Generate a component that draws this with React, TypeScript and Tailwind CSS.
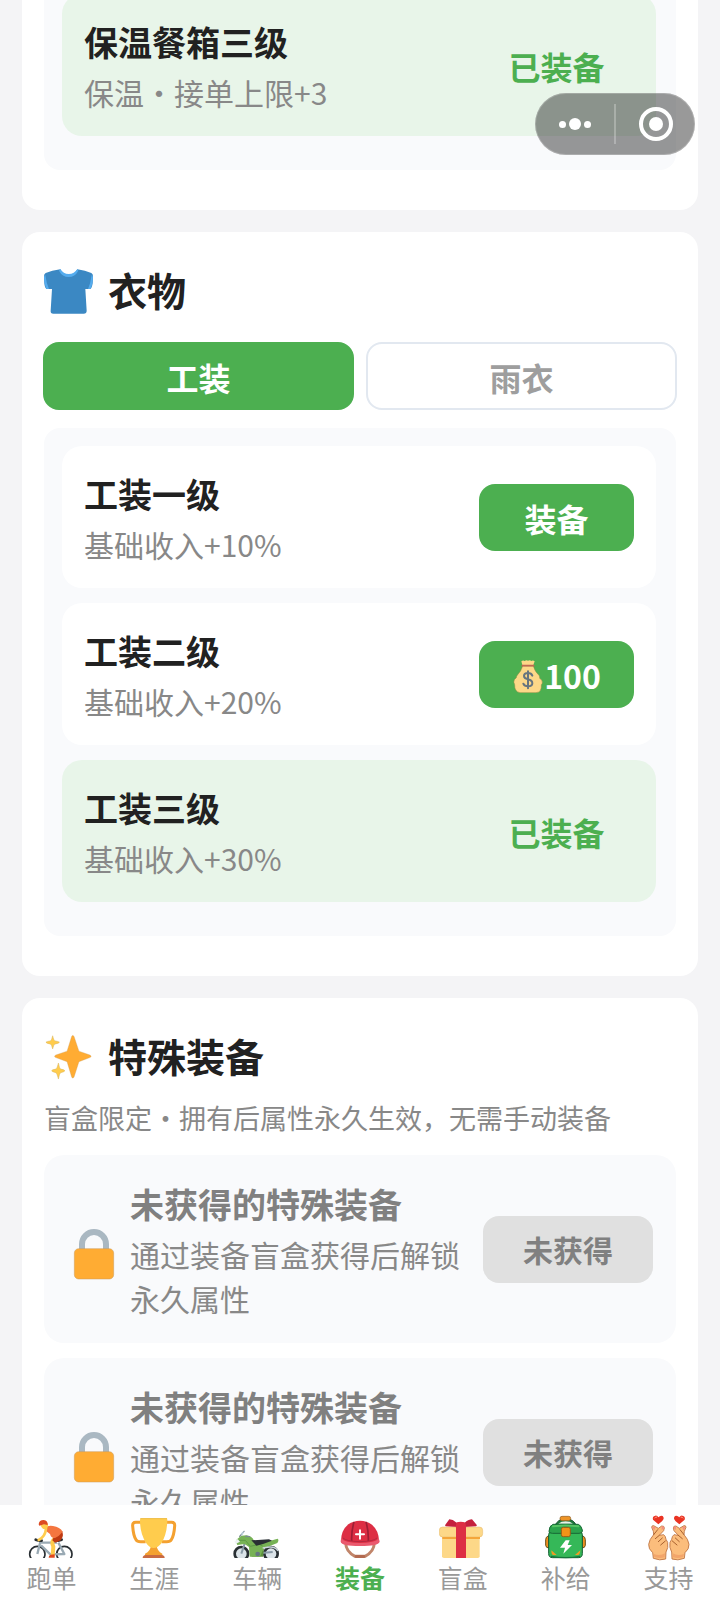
import { useState } from 'react';
import type { ReactNode } from 'react';

function ShirtIcon() {
  return (
    <svg aria-hidden="true" className="h-[50px] w-[50px] shrink-0" viewBox="132 102 150 150">
      <path d="M181 118 Q155 121 137 129 Q132 132 132 139 L133 160 Q134 174 140 177 L156 177 L152 242 Q151 251 160 251 L251 251 Q260 251 260 242 L256 177 L271 177 Q276 174 278 160 L279 139 Q279 132 274 129 Q256 121 232 118 Q220 139 205 139 Q190 139 181 118Z" fill="#3b88c3" />
      <path d="M181 117 Q190 132 206 132 Q223 132 232 117 L235 122 Q225 141 206 141 Q187 141 177 122Z" fill="#55acee" />
      <path d="M132 140 L136 135 Q139 159 147 177 L140 177 Q133 165 132 140Z M279 140 L275 135 Q272 159 264 177 L271 177 Q278 165 279 140Z" fill="#55acee" />
    </svg>
  );
}

function SparklesIcon() {
  return (
    <svg aria-hidden="true" className="h-[50px] w-[50px] shrink-0" viewBox="132 90 150 156">
      <path d="M276 172 Q276 175 272 176 L238 189 L223 236 Q221 240 219 240 Q216 240 215 236 L201 189 L166 176 Q162 175 162 172 Q162 170 166 168 L201 156 L215 111 Q216 107 219 107 Q221 107 223 111 L238 156 L272 168 Q276 170 276 172Z" fill="#ffac33" stroke="#c99a55" strokeWidth="1" />
      <path d="M156 108 Q159 122 163 124 Q177 126 177 128 Q177 131 163 134 Q159 136 156 149 Q153 136 149 134 Q135 131 135 128 Q135 126 149 124 Q153 122 156 108Z M174 193 Q177 210 181 212 Q194 214 194 217 Q194 220 181 223 Q177 226 174 243 Q170 226 166 223 Q153 220 153 217 Q153 214 166 212 Q170 210 174 193Z" fill="#ffcc4d" stroke="#d8b35b" strokeWidth="1.5" strokeLinejoin="round" />
    </svg>
  );
}

function LockIcon() {
  return (
    <svg aria-hidden="true" className="h-[62px] w-[54px] shrink-0" viewBox="198 54 162 186">
      <path d="M243 150 V132 A36 36 0 0 1 315 132 V150" fill="none" stroke="#aab8c2" strokeWidth="18" />
      <rect x="220" y="146" width="118" height="91" rx="13" fill="#ffac33" stroke="#c99a5c" strokeWidth="1.5" />
    </svg>
  );
}

function MoneyBagIcon() {
  return (
    <svg aria-hidden="true" className="h-9 w-8 shrink-0" viewBox="456 290 96 108">
      <path d="M488 317 L520 317 Q525 335 537 345 Q540 350 539 354 Q548 359 547 368 Q546 372 544 373 Q546 396 528 397 L480 397 Q463 394 464 373 Q459 366 463 358 L469 352 Q469 347 473 343 Q483 334 488 317Z" fill="#fdd888" stroke="#8c8a43" strokeWidth="1.5" />
      <path d="M487 314 L484 303 Q489 299 494 302 Q499 298 504 301 Q510 298 514 302 Q519 299 524 303 L520 314Z" fill="#fdd888" />
      <path d="M487 316 H521" stroke="#bf6952" strokeWidth="5" strokeLinecap="round" />
      <path d="M517 346 Q514 338 504 338 Q492 338 492 347 Q492 354 504 357 Q517 360 517 369 Q517 378 504 378 Q493 378 490 370 M504 333 V384" fill="none" stroke="#67757f" strokeWidth="6" strokeLinecap="round" />
    </svg>
  );
}

function CyclistIcon() {
  return (
    <svg aria-hidden="true" className="h-12 w-12" viewBox="82 72 144 144">
      <defs>
        <clipPath id="bike-ground"><rect x="82" y="72" width="144" height="132" /></clipPath>
      </defs>
      <g clipPath="url(#bike-ground)" fill="none">
        <circle cx="113" cy="192" r="23" stroke="#292f33" strokeWidth="5" />
        <circle cx="194" cy="192" r="23" stroke="#292f33" strokeWidth="5" />
        <path d="M113 192 L122 155 L117 148 M122 158 L172 158 M124 166 L152 193 L194 192 L176 158" stroke="#9aaab4" strokeWidth="7" strokeLinejoin="round" />
        <path d="M108 149 Q118 153 126 152 M175 152 L186 149" stroke="#292f33" strokeWidth="8" strokeLinecap="round" />
        <path d="M168 145 Q152 152 161 170 L159 196" stroke="#ffcc4d" strokeWidth="12" strokeLinejoin="round" />
        <path d="M158 151 Q160 140 178 128 L188 124 Q194 145 178 154 L166 158Z" fill="#be3a12" />
        <path d="M136 113 Q146 105 160 108 Q181 111 189 125 Q178 139 166 144 Q154 145 151 132 L140 124Z" fill="#f4763f" />
        <path d="M139 116 Q137 140 117 150" stroke="#ffcc4d" strokeWidth="8" strokeLinecap="round" />
        <path d="M123 104 L144 100 Q148 112 138 117 Q126 119 123 104Z" fill="#ffcc4d" />
        <path d="M117 103 Q118 90 132 90 Q145 92 144 105 L133 103 L119 107Z" fill="#dd4b23" />
        <path d="M152 194 L165 193 V203 H147Q147 197 152 194Z" fill="#e0491f" />
      </g>
    </svg>
  );
}

function TrophyIcon() {
  return (
    <svg aria-hidden="true" className="h-12 w-12" viewBox="391 72 144 144">
      <path d="M424 97 H408 Q398 97 399 108 Q401 137 409 149 Q413 156 426 155 H438 M499 97 H516 Q526 97 525 108 Q523 137 515 149 Q511 156 498 155 H486" fill="none" stroke="#f4a130" strokeWidth="9" />
      <path d="M454 165 H471 Q472 184 488 191 V197 H436 V191 Q453 184 454 165Z" fill="#f4a130" />
      <path d="M424 85 H501 Q503 85 503 91 Q502 133 485 160 Q475 174 462 174 Q449 174 440 160 Q421 132 421 91 Q421 85 424 85Z" fill="#ffcc4d" />
      <path d="M422 86 H502" stroke="#eebd48" strokeWidth="3" />
      <path d="M429 204 Q429 196 438 195 H486 Q495 196 495 204Z" fill="#c96a42" />
    </svg>
  );
}

function MotorcycleIcon() {
  return (
    <svg aria-hidden="true" className="h-12 w-12" viewBox="-21 72 144 144">
      <defs>
        <clipPath id="moto-ground"><rect x="-21" y="72" width="144" height="132" /></clipPath>
      </defs>
      <g clipPath="url(#moto-ground)">
        <circle cx="4" cy="191" r="20" fill="#dbe3e8" stroke="#292f33" strokeWidth="8" />
        <circle cx="93" cy="191" r="20" fill="#dbe3e8" stroke="#292f33" strokeWidth="8" />
        <path d="M4 191 L18 149 M55 190 L98 186" stroke="#8899a6" strokeWidth="6" />
        <path d="M30 165 L73 165 L69 200 H35Z" fill="#5c913b" />
        <path d="M-9 148 L4 137 L20 136 Q36 139 42 152 L64 160 L113 146 Q118 150 112 159 L82 171 Q74 171 67 184 L60 200 H29 L27 171 L14 162 L-8 165 Q-14 155 -9 148Z" fill="#77b255" />
        <path d="M-6 151 L16 151 L31 169 L58 163 L68 168" fill="none" stroke="#5c9b45" strokeWidth="3" />
        <path d="M34 151 L87 148 L96 152 L69 162 L49 167Z" fill="#292f33" />
        <path d="M-17 155 L-7 147 L0 155 L-12 161Z" fill="#eef3f5" />
        <path d="M-1 139 L12 124 M17 139 L29 140" stroke="#7b8b94" strokeWidth="4" strokeLinecap="round" />
        <path d="M3 130 L13 123 L6 139Z" fill="#bcd0dc" />
        <circle cx="53" cy="192" r="7" fill="#657780" />
        <path d="M68 174 L88 171 Q108 170 114 183" fill="none" stroke="#ccd6dd" strokeWidth="5" />
      </g>
    </svg>
  );
}

function HelmetIcon() {
  return (
    <svg aria-hidden="true" className="h-12 w-12" viewBox="288 72 144 144">
      <path d="M317 159 Q318 185 345 199 H375 Q402 185 403 159" fill="none" stroke="#c1856a" strokeWidth="9" />
      <rect x="344" y="195" width="32" height="9" rx="4" fill="#b36a50" />
      <path d="M303 157 Q302 122 325 103 Q340 92 360 92 Q380 92 396 104 Q418 123 417 157 Q388 166 360 166 Q332 166 303 157Z" fill="#dd2e44" />
      <path d="M306 144 Q301 149 302 155 Q305 168 360 168 Q415 168 419 155 Q419 149 414 144 Q414 152 397 155 Q379 159 360 159 Q341 159 323 155 Q307 152 306 144Z" fill="#ea596e" />
      <path d="M342 96 Q334 122 335 153 M378 96 Q386 122 385 153" fill="none" stroke="#9c1f35" strokeWidth="5" />
      <path d="M309 144 Q318 154 360 155 Q402 154 411 144" fill="none" stroke="#b42840" strokeWidth="3" />
      <path d="M360 121 V146 M348 133 H372" stroke="#fff" strokeWidth="6" strokeLinecap="round" />
    </svg>
  );
}

function GiftIcon() {
  return (
    <svg aria-hidden="true" className="h-12 w-12" viewBox="597 72 144 144">
      <path d="M606 139 H719 V199 Q719 204 713 204 H612 Q606 204 606 199Z" fill="#fdd888" />
      <rect x="598" y="111" width="130" height="30" rx="10" fill="#fdd888" stroke="#e5b767" strokeWidth="1.5" />
      <path d="M607 144 H720" stroke="#f4a63a" strokeWidth="6" />
      <rect x="648" y="106" width="30" height="98" fill="#dd2e44" />
      <path d="M661 111 Q640 111 617 109 L615 106 L628 88 Q638 88 650 98 Q661 94 674 98 Q687 88 696 88 L711 106 L708 109 Q684 111 661 111Z" fill="#c4203d" />
      <path d="M649 98 Q662 93 676 98 L679 112 H647Z" fill="#dd2e44" />
    </svg>
  );
}

function BackpackIcon() {
  return (
    <svg aria-hidden="true" className="h-12 w-12" viewBox="185 72 144 144">
      <path d="M222 110 Q232 86 256 86 Q280 86 290 110Z" fill="#1d7a3d" stroke="#174f2b" strokeWidth="3" />
      <path d="M234 101 Q243 94 256 94 Q269 94 278 101Z" fill="#e9f3ea" />
      <rect x="239" y="79" width="32" height="13" rx="6" fill="#ee9426" stroke="#8c5a20" strokeWidth="2" />
      <path d="M205 137 Q196 140 196 149 V166 Q197 174 206 174Z M306 137 Q315 140 315 149 V166 Q314 174 305 174Z" fill="#ef9020" stroke="#6b501b" strokeWidth="3" />
      <rect x="205" y="122" width="101" height="81" rx="12" fill="#35b858" stroke="#135d32" strokeWidth="3" />
      <path d="M218 103 H294 Q303 107 306 120 V124 Q304 130 296 130 H216 Q207 130 206 124 Q206 108 218 103Z" fill="#2ba34c" stroke="#176835" strokeWidth="3" />
      <path d="M218 109 Q255 104 294 109" fill="none" stroke="#56c464" strokeWidth="6" strokeLinecap="round" />
      <path d="M212 199 Q257 207 299 199" fill="none" stroke="#17763b" strokeWidth="4" />
      <rect x="243" y="112" width="27" height="28" rx="6" fill="#f29318" stroke="#955b16" strokeWidth="3" />
      <path d="M213 181 L229 195 H218 Q213 193 213 181Z M300 181 L284 195 H294 Q299 193 300 181Z" fill="#ee9c25" />
      <path d="M256 151 H268 L262 165 H275 L249 191 L254 173 H239Z" fill="#fff" />
    </svg>
  );
}

function HandHeart() {
  return (
    <>
      <path d="M534 103 L518 89 Q515 78 525 77 Q531 76 534 82 Q540 75 547 78 Q554 85 545 94Z" fill="#ea3323" />
      <path d="M523 84 Q525 80 529 81" fill="none" stroke="#ff9d86" strokeWidth="3" strokeLinecap="round" />
      <path d="M519 124 L514 112 Q514 106 520 107 L534 115 L544 108 Q552 107 552 114 L550 122 L537 136 L550 134 Q556 138 557 148 L562 157 Q565 173 557 186 L556 207 Q539 213 519 205 L517 188 Q504 177 505 163 Q507 148 520 134Z" fill="#fbbd7c" stroke="#bb7040" strokeWidth="2.5" strokeLinejoin="round" />
      <path d="M515 111 Q521 108 525 112 L522 121Z M544 109 Q551 107 552 114 L544 120Z" fill="#f58d80" />
      <path d="M537 136 L525 146 M546 144 L534 155 M555 153 L541 165 M532 119 L520 134" fill="none" stroke="#a8612f" strokeWidth="3" strokeLinecap="round" />
      <path d="M522 201 Q539 207 553 202 L554 190 Q539 199 520 192Z" fill="#f2a56b" />
    </>
  );
}

function HandsIcon() {
  return (
    <svg aria-hidden="true" className="h-12 w-12" viewBox="494 72 144 144">
      <HandHeart />
      <g transform="translate(1131 0) scale(-1 1)">
        <HandHeart />
      </g>
    </svg>
  );
}

const cardClass = 'rounded-[18px] bg-white px-[22px]';
const trayClass = 'flex flex-col gap-[15px] rounded-[16px] bg-[#f9fafc] pt-[18px] pr-5 pb-[34px] pl-[18px]';

function GearRow({ name, effect, equipped = false, action }: { name: string; effect: string; equipped?: boolean; action?: ReactNode }) {
  return (
    <li className={`flex items-center justify-between rounded-[20px] p-[22px] ${equipped ? 'bg-[#e8f5e9]' : 'bg-white'}`}>
      <div className="flex flex-col gap-[2px]">
        <h3 className="text-[34px] leading-[52px] font-bold">{name}</h3>
        <p className="text-[30px] leading-[44px] text-[#888888]">{effect}</p>
      </div>
      {equipped ? (
        <span className="w-[155px] pt-[2px] text-center text-[32px] leading-[44px] font-bold text-[#4caf50]">已装备</span>
      ) : (
        <button type="button" className="flex h-[67px] w-[155px] items-center justify-center rounded-[16px] bg-[#4caf50] pt-[2px] text-[32px] leading-[44px] font-bold text-white">
          {action}
        </button>
      )}
    </li>
  );
}

function SectionTitle({ icon, children }: { icon: ReactNode; children: ReactNode }) {
  return (
    <header className="flex h-[70px] items-center gap-[14px]">
      {icon}
      <h2 className="text-[39px] leading-[56px] font-bold">{children}</h2>
    </header>
  );
}

function LockedRow() {
  return (
    <li className="flex items-center rounded-[20px] bg-[#f9fafc] px-[23px] py-[23px]">
      <LockIcon />
      <div className="ml-[9px] flex min-w-0 flex-1 flex-col gap-[2px]">
        <h3 className="text-[34px] leading-[52px] font-bold text-[#808080]">未获得的特殊装备</h3>
        <p className="text-[30px] leading-[44px] text-[#888888]">通过装备盲盒获得后解锁永久属性</p>
      </div>
      <button type="button" disabled className="ml-3 h-[67px] w-[170px] shrink-0 rounded-[16px] bg-[#e0e0e0] text-[30px] leading-[44px] font-bold text-[#808080]">
        未获得
      </button>
    </li>
  );
}

const navItems = [
  { label: '跑单', icon: <CyclistIcon /> },
  { label: '生涯', icon: <TrophyIcon /> },
  { label: '车辆', icon: <MotorcycleIcon /> },
  { label: '装备', icon: <HelmetIcon /> },
  { label: '盲盒', icon: <GiftIcon /> },
  { label: '补给', icon: <BackpackIcon /> },
  { label: '支持', icon: <HandsIcon /> },
];

export default function App() {
  const [tab, setTab] = useState('工装');

  return (
    <div lang="zh-CN" className="flex h-screen flex-col overflow-hidden bg-[#f4f4f6] font-['Noto_Sans_CJK_SC',sans-serif] text-[#212121]">
      <div className="fixed top-[93px] right-[25px] z-10 flex h-[62px] w-40 items-center rounded-full bg-black/40 ring-1 ring-white/20 ring-inset">
        <button type="button" aria-label="更多" className="flex h-full flex-1 items-center justify-center gap-[3px]">
          <span className="size-[7px] rounded-full bg-white" />
          <span className="size-3 rounded-full bg-white" />
          <span className="size-[7px] rounded-full bg-white" />
        </button>
        <span className="h-10 w-[2px] bg-white/25" />
        <button type="button" aria-label="关闭" className="flex h-full flex-1 items-center justify-center">
          <span className="flex size-[34px] items-center justify-center rounded-full border-4 border-white">
            <span className="size-[14px] rounded-full bg-white" />
          </span>
        </button>
      </div>

      <div className="min-h-0 flex-1 overflow-hidden">
        <main className="-mt-6 flex flex-col gap-[22px] px-[22px]">
          <section className={`${cardClass} pb-10`}>
            <ul className={trayClass}>
              <GearRow name="保温餐箱三级" effect="保温・接单上限+3" equipped />
            </ul>
          </section>

          <section className={`${cardClass} pt-[22px] pb-10`}>
            <SectionTitle icon={<ShirtIcon />}>衣物</SectionTitle>
            <div className="-mx-px mt-[18px] mb-[18px] grid grid-cols-2 gap-3">
              {['工装', '雨衣'].map((name) => (
                <button
                  key={name}
                  type="button"
                  aria-pressed={tab === name}
                  onClick={() => setTab(name)}
                  className={`h-[68px] rounded-[16px] border-2 pt-[2px] text-[32px] leading-[44px] font-bold ${tab === name ? 'border-[#4caf50] bg-[#4caf50] text-white' : 'border-[#e2e8f0] bg-white text-[#9e9e9e]'}`}
                >
                  {name}
                </button>
              ))}
            </div>
            <ul className={trayClass}>
              <GearRow name="工装一级" effect="基础收入+10%" action="装备" />
              <GearRow name="工装二级" effect="基础收入+20%" action={<><MoneyBagIcon />100</>} />
              <GearRow name="工装三级" effect="基础收入+30%" equipped />
            </ul>
          </section>

          <section className={`${cardClass} pt-[22px] pb-10`}>
            <SectionTitle icon={<SparklesIcon />}>特殊装备</SectionTitle>
            <p className="mt-2 mb-[17px] text-[27px] leading-[40px] text-[#888888]">盲盒限定・拥有后属性永久生效，无需手动装备</p>
            <ul className="flex flex-col gap-[15px]">
              <LockedRow />
              <LockedRow />
            </ul>
          </section>
        </main>
      </div>

      <nav className="grid grid-cols-7 bg-white pt-[9px] pb-4">
        {navItems.map(({ label, icon }) => (
          <a
            key={label}
            href="#"
            aria-current={label === '装备' ? 'page' : undefined}
            className={`flex flex-col items-center text-[25px] leading-[30px] ${label === '装备' ? 'font-bold text-[#4caf50]' : 'text-[#999999]'}`}
          >
            {icon}
            {label}
          </a>
        ))}
      </nav>
    </div>
  );
}
